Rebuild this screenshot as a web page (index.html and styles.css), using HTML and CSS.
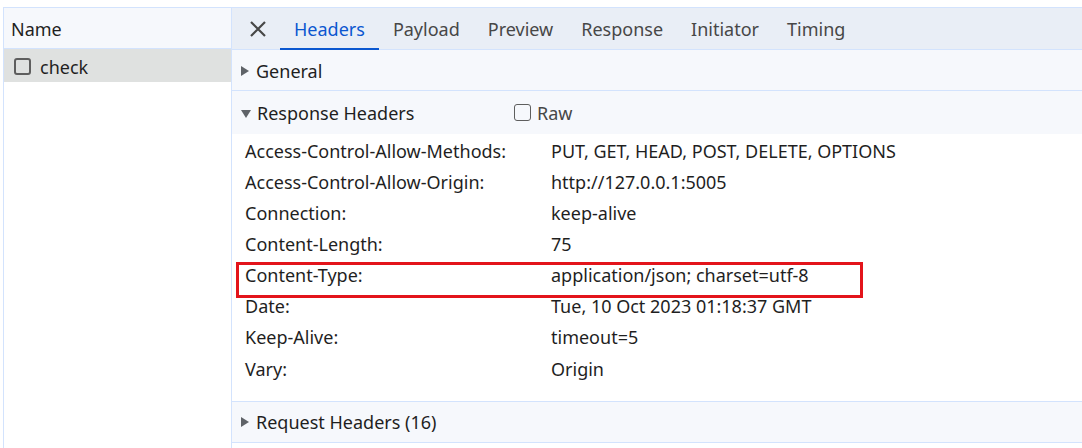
FILE: index.html
```html
<!DOCTYPE html>
<html>
<head>
<meta charset="utf-8">
<link rel="stylesheet" href="styles.css">
</head>
<body>
<div class="top-strip"></div>
<div class="devtools">
  <aside class="req-list">
    <div class="list-head">Name</div>
    <div class="list-row selected">
      <span class="box"></span>
      <span class="req-name">check</span>
    </div>
  </aside>
  <main class="detail">
    <nav class="tabs">
      <span class="close">
        <svg width="18" height="18" viewBox="0 0 18 18"><path d="M2 2L16 16M16 2L2 16" stroke="#474747" stroke-width="2.2" fill="none"/></svg>
      </span>
      <span class="tab active">Headers</span>
      <span class="tab">Payload</span>
      <span class="tab">Preview</span>
      <span class="tab">Response</span>
      <span class="tab">Initiator</span>
      <span class="tab">Timing</span>
    </nav>
    <section class="section">
      <div class="section-head general"><span class="tri right"></span>General</div>
    </section>
    <section class="section">
      <div class="section-head resp"><span class="tri down"></span><span class="sh-title">Response Headers</span><span class="raw"><span class="box small"></span>Raw</span></div>
      <div class="rows">
        <div class="row"><span class="k">Access-Control-Allow-Methods:</span><span class="v">PUT, GET, HEAD, POST, DELETE, OPTIONS</span></div>
        <div class="row"><span class="k">Access-Control-Allow-Origin:</span><span class="v">http://127.0.0.1:5005</span></div>
        <div class="row"><span class="k">Connection:</span><span class="v">keep-alive</span></div>
        <div class="row"><span class="k">Content-Length:</span><span class="v">75</span></div>
        <div class="row highlighted"><span class="k">Content-Type:</span><span class="v">application/json; charset=utf-8</span><span class="mark"></span></div>
        <div class="row"><span class="k">Date:</span><span class="v">Tue, 10 Oct 2023 01:18:37 GMT</span></div>
        <div class="row"><span class="k">Keep-Alive:</span><span class="v">timeout=5</span></div>
        <div class="row"><span class="k">Vary:</span><span class="v">Origin</span></div>
      </div>
    </section>
    <section class="section">
      <div class="section-head"><span class="tri right"></span>Request Headers (16)</div>
    </section>
  </main>
</div>
</body>
</html>
```
FILE: styles.css
```css
* { box-sizing: border-box; }
html, body { margin: 0; padding: 0; background: #fff; }
body {
  font-family: "Noto Sans", "Open Sans", sans-serif;
  font-size: 18px;
  color: #1f1f1f;
  width: 1082px;
  height: 448px;
  overflow: hidden;
}
.top-strip { height: 7px; background: #fff; }
.devtools {
  display: flex;
  margin-left: 3px;
  border-top: 1px solid #d3e3fd;
  border-left: 1px solid #d3e3fd;
  height: 441px;
}
.req-list {
  width: 228px;
  flex: none;
  border-right: 1px solid #d3e3fd;
  background: #fff;
}
.list-head {
  height: 41px;
  background: #f6f8fc;
  display: flex;
  align-items: center;
  padding-left: 7px;
  padding-top: 2px;
  border-bottom: 1px solid #d3e3fd;
  line-height: 1;
}
.list-row {
  height: 33px;
  display: flex;
  align-items: center;
  padding-left: 10px;
  padding-top: 2px;
  gap: 9px;
}
.list-row.selected { background: #dfe1e0; }
.list-row .box { margin-top: -1px; }
.box {
  width: 17px;
  height: 17px;
  border: 2px solid #5e5e5e;
  border-radius: 3px;
  display: inline-block;
  flex: none;
}
.detail { flex: 1; display: flex; flex-direction: column; }
.tabs {
  height: 42px;
  background: #e9eef6;
  border-bottom: 1px solid #d3e3fd;
  display: flex;
  align-items: stretch;
  padding-left: 17px;
}
.close { display: flex; align-items: center; width: 31px; }
.tab {
  display: flex;
  align-items: center;
  padding: 2px 14px 0 14px;
  color: #474747;
  border-bottom: 2px solid transparent;
  margin-bottom: -1px;
}
.tab.active { color: #0b57d0; border-bottom-color: #0b57d0; }
.section { border-bottom: 1px solid #d3e3fd; }
.section-head {
  height: 40px;
  background: #f6f8fc;
  display: flex;
  align-items: center;
  padding-left: 9px;
}
.section-head.general { padding-top: 2px; }
.section-head.resp { height: 43px; }
.tri { width: 0; height: 0; margin-right: 7px; display: inline-block; }
.tri.right { border-top: 5px solid transparent; border-bottom: 5px solid transparent; border-left: 8px solid #5f6368; }
.tri.down { border-left: 5px solid transparent; border-right: 5px solid transparent; border-top: 8px solid #5f6368; margin-right: 6px; margin-top: 2px; }
.sh-title { width: 257px; }
.raw { display: flex; align-items: center; gap: 6px; color: #474747; }
.box.small { width: 17px; height: 17px; border-width: 1.5px; border-color: #5e5e5e; }
.rows { background: #fff; padding: 1px 0 17px 0; }
.row {
  height: 31.15px;
  display: flex;
  align-items: center;
  padding-left: 13px;
  position: relative;
}
.k { width: 306px; flex: none; }
.v { flex: none; }
.mark {
  position: absolute;
  left: 4px;
  top: 2px;
  width: 627px;
  height: 36px;
  border: 3px solid #e3141b;
}
```
